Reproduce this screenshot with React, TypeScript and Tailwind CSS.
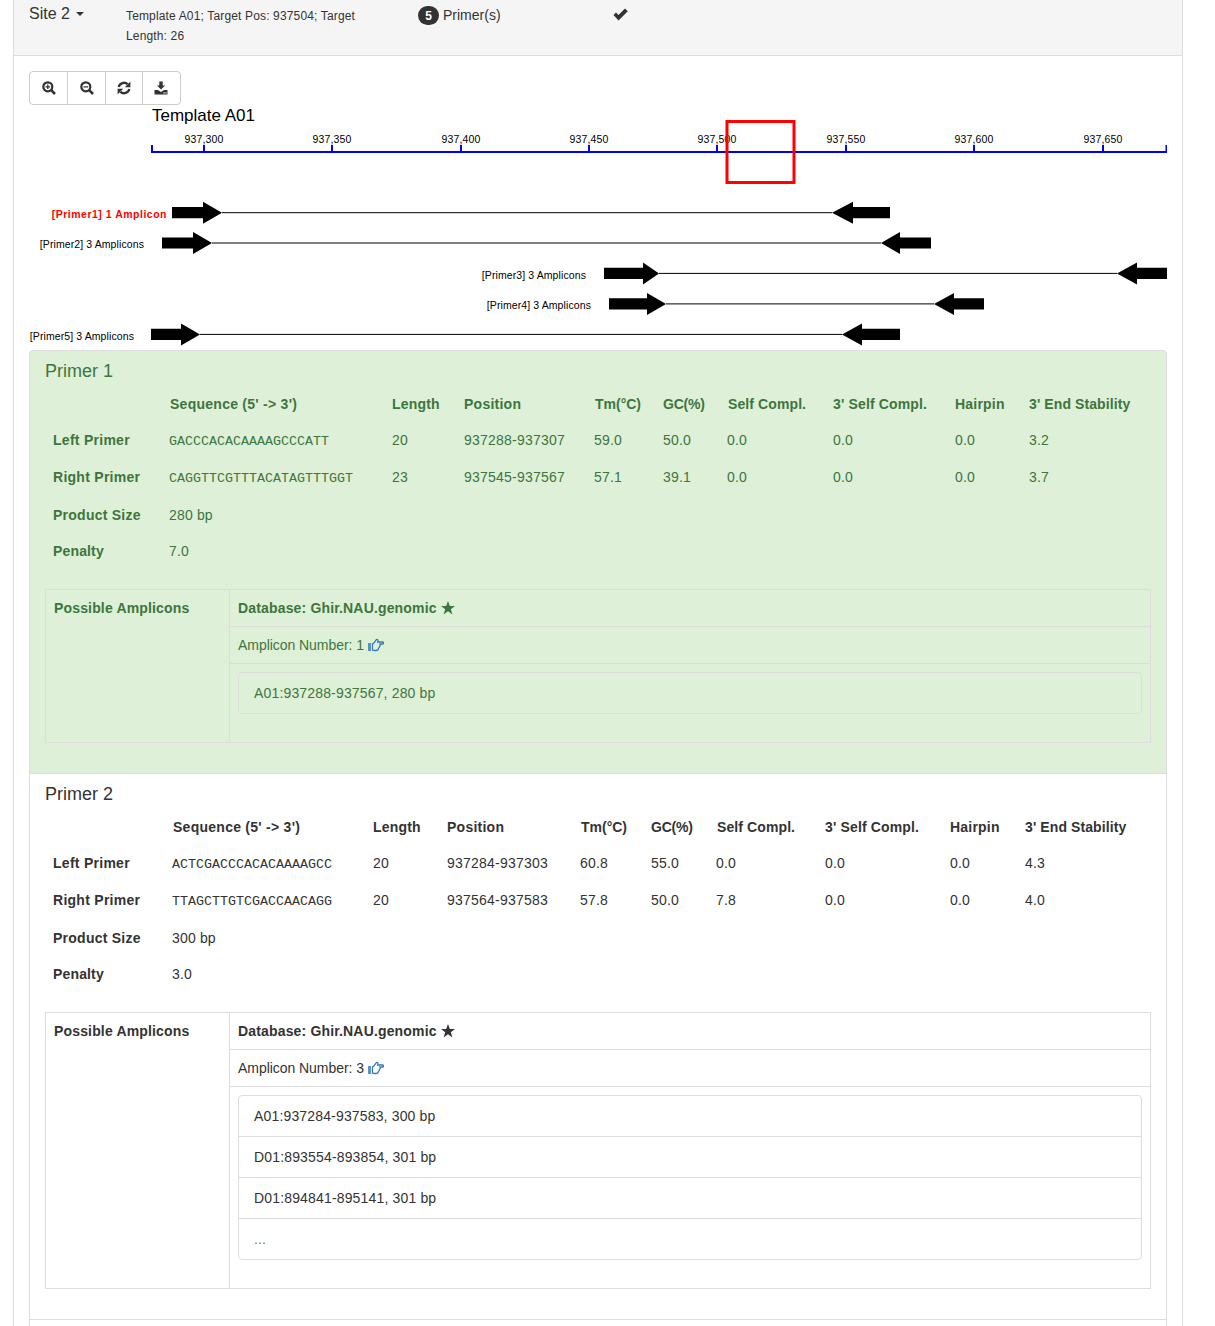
type PrimerRow = {
  seq: string
  length: string
  position: string
  tm: string
  gc: string
  self: string
  selfEnd: string
  hairpin: string
  stability: string
}

type PrimerInfo = {
  title: string
  widths: string[]
  left: PrimerRow
  right: PrimerRow
  size: string
  penalty: string
  amplicons: string[]
  active?: boolean
}

const primers: PrimerInfo[] = [
  {
    title: "Primer 1",
    active: true,
    widths: ["w-[116px]", "w-[223px]", "w-[72px]", "w-[130px]", "w-[69px]", "w-[64px]", "w-[106px]", "w-[122px]", "w-[74px]", "w-[130px]"],
    left: { seq: "GACCCACACAAAAGCCCATT", length: "20", position: "937288-937307", tm: "59.0", gc: "50.0", self: "0.0", selfEnd: "0.0", hairpin: "0.0", stability: "3.2" },
    right: { seq: "CAGGTTCGTTTACATAGTTTGGT", length: "23", position: "937545-937567", tm: "57.1", gc: "39.1", self: "0.0", selfEnd: "0.0", hairpin: "0.0", stability: "3.7" },
    size: "280 bp",
    penalty: "7.0",
    amplicons: ["A01:937288-937567, 280 bp"],
  },
  {
    title: "Primer 2",
    widths: ["w-[119px]", "w-[201px]", "w-[74px]", "w-[133px]", "w-[71px]", "w-[65px]", "w-[109px]", "w-[125px]", "w-[75px]", "w-[134px]"],
    left: { seq: "ACTCGACCCACACAAAAGCC", length: "20", position: "937284-937303", tm: "60.8", gc: "55.0", self: "0.0", selfEnd: "0.0", hairpin: "0.0", stability: "4.3" },
    right: { seq: "TTAGCTTGTCGACCAACAGG", length: "20", position: "937564-937583", tm: "57.8", gc: "50.0", self: "7.8", selfEnd: "0.0", hairpin: "0.0", stability: "4.0" },
    size: "300 bp",
    penalty: "3.0",
    amplicons: ["A01:937284-937583, 300 bp", "D01:893554-893854, 301 bp", "D01:894841-895141, 301 bp"],
  },
]

const headers = [
  { label: "Length", cls: "pl-2 tracking-[0.2px]" },
  { label: "Position", cls: "pl-2 tracking-[0.25px]" },
  { label: "Tm(°C)", cls: "pl-[9px] tracking-[0px]" },
  { label: "GC(%)", cls: "pl-2 tracking-[-0.2px]" },
  { label: "Self Compl.", cls: "pl-[9px] tracking-[0.1px]" },
  { label: "3' Self Compl.", cls: "pl-2 tracking-[0.15px]" },
  { label: "Hairpin", cls: "pl-2 tracking-[0.2px]" },
  { label: "3' End Stability", cls: "pl-2 tracking-[0.1px]" },
]

const ticks = [
  { x: 204, label: "937,300" },
  { x: 332, label: "937,350" },
  { x: 461, label: "937,400" },
  { x: 589, label: "937,450" },
  { x: 717, label: "937,500" },
  { x: 846, label: "937,550" },
  { x: 974, label: "937,600" },
  { x: 1103, label: "937,650" },
]

const tracks = [
  { y: 212.7, x1: 172, head1: 203, tip1: 222, tip2: 832, head2: 853, x2: 890, label: "[Primer1] 1 Amplicon", labelX: 167, labelY: 218, red: true },
  { y: 243, x1: 162, head1: 193, tip1: 212, tip2: 881, head2: 900, x2: 931, label: "[Primer2] 3 Amplicons", labelX: 144, labelY: 248 },
  { y: 273.4, x1: 604, head1: 643, tip1: 659, tip2: 1117, head2: 1137, x2: 1167, label: "[Primer3] 3 Amplicons", labelX: 586, labelY: 279 },
  { y: 303.9, x1: 609, head1: 647, tip1: 666, tip2: 934, head2: 954, x2: 984, label: "[Primer4] 3 Amplicons", labelX: 591, labelY: 309 },
  { y: 334.4, x1: 151, head1: 181, tip1: 200, tip2: 842, head2: 862, x2: 900, label: "[Primer5] 3 Amplicons", labelX: 134, labelY: 340 },
]

function SearchIcon({ plus }: { plus?: boolean }) {
  return (
    <svg width="14" height="14" viewBox="0 0 14 14" fill="none" stroke="#333" className="ml-px">
      <circle cx="5.8" cy="5.8" r="4.5" strokeWidth="2.2" />
      <path d="M9.2 9.2 L13 13" strokeWidth="2.6" />
      <path d={plus ? "M3.5 5.8 H8.1 M5.8 3.5 V8.1" : "M3.5 5.8 H8.1"} strokeWidth="1.3" />
    </svg>
  )
}

function RefreshIcon() {
  return (
    <svg width="14" height="14" viewBox="0 0 14 14" fill="#333">
      <g>
        <path d="M1.7 6 A5.4 5.4 0 0 1 10.6 3.2" fill="none" stroke="#333" strokeWidth="2.3" />
        <polygon points="13.4,0.6 13.4,6.2 7.8,6.2" />
      </g>
      <g transform="rotate(180 7 7)">
        <path d="M1.7 6 A5.4 5.4 0 0 1 10.6 3.2" fill="none" stroke="#333" strokeWidth="2.3" />
        <polygon points="13.4,0.6 13.4,6.2 7.8,6.2" />
      </g>
    </svg>
  )
}

function DownloadIcon() {
  return (
    <svg width="14" height="14" viewBox="0 0 14 14" fill="#333" className="mr-px">
      <path d="M5.3 0.5 H8.7 V4.5 H11 L7 8.6 L3 4.5 H5.3 Z" />
      <path d="M0.5 9 H4 L7 11 L10 9 H13.5 V13.5 H0.5 Z" />
      <rect x="9.5" y="11.3" width="1.2" height="1.2" fill="#fff" />
      <rect x="11.4" y="11.3" width="1.2" height="1.2" fill="#fff" />
    </svg>
  )
}

function StarIcon() {
  return (
    <svg width="14" height="14" viewBox="0 0 14 14" fill="currentColor">
      <polygon points="7,0 8.8,5 14,5 9.8,8.2 11.4,13.6 7,10.3 2.6,13.6 4.2,8.2 0,5 5.2,5" />
    </svg>
  )
}

function HandIcon() {
  return (
    <svg width="16" height="14" viewBox="0 0 16 14" fill="none" stroke="#337ab7" strokeWidth="1.3">
      <rect x="0" y="5" width="3" height="8" fill="#337ab7" fillOpacity="0.8" stroke="none" />
      <path d="M4.5 6 C6 5 7 4 8 2 C8.5 1 10 1 10 2.5 L9.7 4 H14.5 C16 4 16 6 14.5 6 H12 C12.5 7 12 8 11.5 8.5 C11.5 9.5 11 10 10.5 10.3 C10.3 11.5 9.5 12.5 8 12.5 H6.5 C5.5 12.5 5 12 4.5 12 Z" />
    </svg>
  )
}

function Toolbar() {
  return (
    <div className="flex h-[34px] w-[152px] overflow-hidden rounded-[4px] border border-[#ccc] bg-white">
      <div className="flex h-[32px] w-[38px] items-center justify-center border-r border-[#ccc]">
        <SearchIcon plus />
      </div>
      <div className="flex h-[32px] w-[38px] items-center justify-center border-r border-[#ccc]">
        <SearchIcon />
      </div>
      <div className="flex h-[32px] w-[37px] items-center justify-center border-r border-[#ccc]">
        <RefreshIcon />
      </div>
      <div className="flex h-[32px] w-[37px] items-center justify-center">
        <DownloadIcon />
      </div>
    </div>
  )
}

function PrimerMap() {
  return (
    <svg className="block tracking-[0px]" width="1138" height="245" viewBox="29 105 1138 245">
      <text x="152" y="121" fontSize="17" fill="#000">
        Template A01
      </text>
      {ticks.map((t) => (
        <g key={t.x}>
          <text x={t.x} y="143" fontSize="10.5" letterSpacing="0.15" textAnchor="middle" fill="#000">
            {t.label}
          </text>
          <rect x={t.x - 1} y="145" width="2" height="6" fill="#00f" />
        </g>
      ))}
      <rect x="151" y="151" width="1016" height="2" fill="#00f" />
      <rect x="151" y="145" width="2" height="7" fill="#00f" />
      <rect x="1165.5" y="145" width="2" height="7" fill="#00f" />
      {tracks.map((t) => (
        <g key={t.y}>
          <text
            x={t.labelX}
            y={t.labelY}
            fontSize="10.5"
            letterSpacing={t.red ? 0.5 : 0.1}
            textAnchor="end"
            fontWeight={t.red ? 700 : 400}
            fill={t.red ? "#f00" : "#000"}
          >
            {t.label}
          </text>
          <path d={`M${t.tip1} ${t.y} H${t.tip2}`} stroke="#000" strokeWidth="1" />
          <polygon
            points={`${t.x1},${t.y - 5.6} ${t.head1},${t.y - 5.6} ${t.head1},${t.y - 11} ${t.tip1},${t.y} ${t.head1},${t.y + 11} ${t.head1},${t.y + 5.6} ${t.x1},${t.y + 5.6}`}
            fill="#000"
          />
          <polygon
            points={`${t.x2},${t.y - 5.6} ${t.head2},${t.y - 5.6} ${t.head2},${t.y - 11} ${t.tip2},${t.y} ${t.head2},${t.y + 11} ${t.head2},${t.y + 5.6} ${t.x2},${t.y + 5.6}`}
            fill="#000"
          />
        </g>
      ))}
      <rect x="727" y="121.5" width="67" height="61" fill="none" stroke="#f00" strokeWidth="3" />
    </svg>
  )
}

function DataRow({ name, row, height }: { name: string; row: PrimerRow; height: string }) {
  const td = "p-0 pl-2 align-middle"
  return (
    <tr className={height}>
      <th className="p-0 pl-2 text-left align-middle font-bold tracking-[0.27px]">{name}</th>
      <td className={td}>
        <span className="font-['Liberation_Mono',monospace] text-[13.33px] tracking-[0px]">{row.seq}</span>
      </td>
      <td className={td}>{row.length}</td>
      <td className={`${td} tracking-[0.23px]`}>{row.position}</td>
      <td className={td}>{row.tm}</td>
      <td className={td}>{row.gc}</td>
      <td className={td}>{row.self}</td>
      <td className={td}>{row.selfEnd}</td>
      <td className={td}>{row.hairpin}</td>
      <td className={td}>{row.stability}</td>
    </tr>
  )
}

function PrimerItem({ primer }: { primer: PrimerInfo }) {
  const count = primer.amplicons.length === 1 ? 1 : 3
  return (
    <div
      className={
        primer.active
          ? "-mt-px border border-[#ddd] bg-[#dff0d8] px-[15px] pt-[10px] pb-[30px] text-[#3c763d] first:mt-0 first:rounded-t-[4px]"
          : "-mt-px border border-[#ddd] bg-white px-[15px] pt-[10px] pb-[30px] text-[#333]"
      }
    >
      <h4 className="mb-[5px] text-[18px] leading-5 font-normal tracking-[0px]">{primer.title}</h4>
      <table className="mb-[20px] w-[1106px] table-fixed border-collapse">
        <colgroup>
          {primer.widths.map((w) => (
            <col key={w} className={w} />
          ))}
        </colgroup>
        <thead>
          <tr className="h-[36px]">
            <th className="p-0"></th>
            <th className="p-0 pl-[9px] text-left align-middle font-bold tracking-[0.26px]">Sequence (5' -&gt; 3')</th>
            {headers.map((h) => (
              <th key={h.label} className={`p-0 text-left align-middle font-bold ${h.cls}`}>
                {h.label}
              </th>
            ))}
          </tr>
        </thead>
        <tbody>
          <DataRow name="Left Primer" row={primer.left} height="h-[37px]" />
          <DataRow name="Right Primer" row={primer.right} height="h-[37px]" />
          <tr className="h-[38px]">
            <th className="p-0 pl-2 text-left align-middle font-bold tracking-[0.25px]">Product Size</th>
            <td className="p-0 pl-2 align-middle" colSpan={9}>
              {primer.size}
            </td>
          </tr>
          <tr className="h-[35px]">
            <th className="p-0 pl-2 text-left align-middle font-bold tracking-[0.15px]">Penalty</th>
            <td className="p-0 pl-2 align-middle" colSpan={9}>
              {primer.penalty}
            </td>
          </tr>
        </tbody>
      </table>

      <div className="flex w-[1106px] border border-[#ddd]">
        <div className="w-[184px] shrink-0 border-r border-[#ddd] px-2 pt-2 leading-5 font-bold">Possible Amplicons</div>
        <div className="min-w-0 flex-1">
          <div className="flex h-[37px] items-center gap-1 border-b border-[#ddd] px-2 font-bold">
            Database: Ghir.NAU.genomic
            <StarIcon />
          </div>
          <div className="flex h-[37px] items-center gap-1 border-b border-[#ddd] px-2 tracking-[-0.05px]">
            Amplicon Number: {count}
            <HandIcon />
          </div>
          <div className="p-2 pb-[28px]">
            <div className="rounded-[4px] border border-[#ddd]">
              {primer.amplicons.map((a) => (
                <div key={a} className="border-b border-[#ddd] px-[15px] py-[10px] leading-5 last:border-b-0">
                  {a}
                </div>
              ))}
              {primer.amplicons.length > 1 && <div className="px-[15px] py-[10px] leading-5 text-[#777]">...</div>}
            </div>
          </div>
        </div>
      </div>
    </div>
  )
}

export default function App() {
  return (
    <div className="h-[1326px] overflow-hidden bg-white font-['Liberation_Sans',Arial,sans-serif] text-[14px] tracking-[0.16px] text-[#333]">
      <div className="ml-[13px] h-full w-[1170px] border-x border-[#ddd]">
        <div className="flex h-[56px] border-b border-[#ddd] bg-[#f5f5f5] pl-[15px] text-[#333]">
          <div className="flex h-[27px] w-[97px] items-center gap-[6px] text-[16px] tracking-[0px]">
            Site 2
            <span className="mt-[1px] border-x-4 border-t-4 border-x-transparent border-t-[#333]"></span>
          </div>
          <div className="w-[292px] pt-[6px] text-[12px] leading-5 tracking-[0.15px]">
            <div className="w-[240px]">Template A01; Target Pos: 937504; Target Length: 26</div>
          </div>
          <div className="flex h-[31px] w-[195px] items-center gap-1 tracking-[0px]">
            <span className="flex h-[19px] w-[21px] items-center justify-center rounded-full bg-[#333] text-[12px] font-bold text-white">
              5
            </span>
            Primer(s)
          </div>
          <div className="pt-[8px]">
            <svg width="15" height="13" viewBox="0 0 15 13" fill="#333">
              <polygon points="0.5,7 3,4.5 5.5,7 12,0.5 14.8,3.3 5.5,12.5" />
            </svg>
          </div>
        </div>
        <div className="px-[15px] pt-[15px]">
          <Toolbar />
          <PrimerMap />
          <div>
            {primers.map((p) => (
              <PrimerItem key={p.title} primer={p} />
            ))}
            <div className="-mt-px h-[40px] border border-[#ddd]"></div>
          </div>
        </div>
      </div>
    </div>
  )
}
